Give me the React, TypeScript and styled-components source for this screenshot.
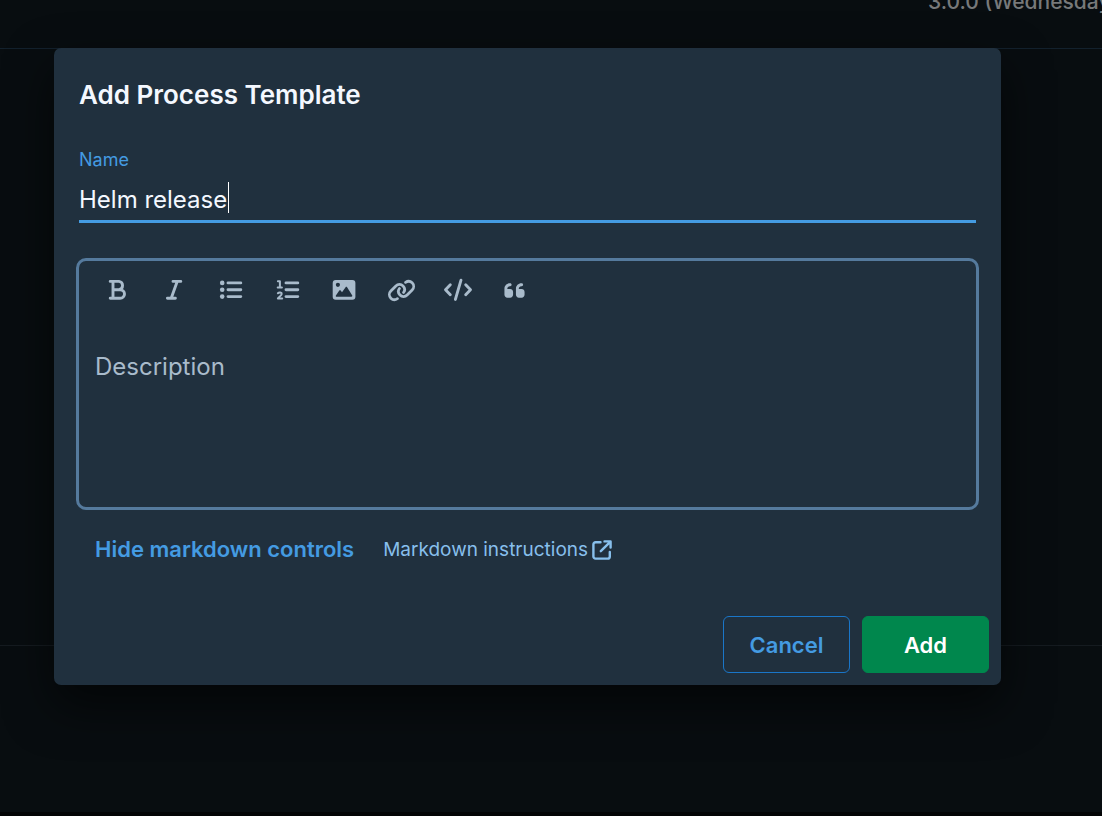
import React, { useState } from 'react';
import styled, { createGlobalStyle } from 'styled-components';
import { FaQuoteLeft } from 'react-icons/fa6';

const GlobalStyle = createGlobalStyle`
  *, *::before, *::after { box-sizing: border-box; }
  body {
    margin: 0;
    background: #080d10;
    color: #f4f8ff;
    font-family: Inter, Roboto, "Liberation Sans", sans-serif;
    overflow: hidden;
  }
  button, input, textarea { font-family: inherit; margin: 0; }
`;

const Page = styled.div`
  display: grid;
  grid-template-rows: 49px 597px 1fr;
  min-height: 100vh;
  border-bottom: 4px solid #030405;
`;

const Header = styled.header`
  display: flex;
  justify-content: flex-end;
  border-bottom: 1px solid #13212d;
  overflow: hidden;
`;

const Version = styled.span`
  flex: none;
  width: 174px;
  height: 24px;
  margin-top: -10px;
  font-size: 21px;
  line-height: 24px;
  font-weight: 500;
  color: #77797a;
  white-space: nowrap;
`;

const Content = styled.main`
  border-bottom: 1px solid #151b20;
`;

const Overlay = styled.div`
  position: absolute;
  inset: 0;
  padding: 48px 101px 0 54px;
`;

const Dialog = styled.form`
  display: flex;
  flex-direction: column;
  padding: 29px 12px 12px;
  border-radius: 7px;
  background: #20303e;
  box-shadow: 0 20px 48px 0 rgba(0, 0, 0, 0.6);
`;

const Title = styled.h1`
  margin: 0 13px;
  font-size: 26px;
  line-height: 36px;
  font-weight: 600;
`;

const Field = styled.div`
  display: flex;
  flex-direction: column;
  margin: 34px 13px 0;
`;

const Label = styled.label`
  font-size: 18px;
  line-height: 26px;
  color: #449be2;
`;

const InputWrap = styled.div`
  position: relative;
  border-bottom: 3px solid #449be2;
`;

const TextInput = styled.input`
  display: block;
  width: 100%;
  height: 47px;
  padding: 6px 0 0;
  border: 0;
  outline: 0;
  background: none;
  color: inherit;
  caret-color: transparent;
  font-size: 24px;
`;

const CaretTrack = styled.span`
  position: absolute;
  left: 0;
  top: 9px;
  height: 31px;
  padding-right: 1px;
  border-right: 1px solid #ffffff;
  font-size: 24px;
  white-space: pre;
  color: transparent;
  pointer-events: none;
  user-select: none;
`;

const Editor = styled.div`
  margin: 35px 10px 0;
  height: 252px;
  display: flex;
  flex-direction: column;
  border: 3px solid #557a9d;
  border-radius: 10px;
`;

const Toolbar = styled.div`
  display: flex;
  justify-content: space-between;
  width: 430px;
  max-width: 100%;
  margin: 13px 22px;
`;

const ToolButton = styled.button`
  display: flex;
  align-items: center;
  justify-content: center;
  width: 32px;
  height: 32px;
  padding: 0;
  border: 0;
  background: none;
  color: #a9bbcb;
`;

const Description = styled.textarea`
  flex: 1;
  padding: 32px 16px 0;
  border: 0;
  outline: 0;
  resize: none;
  background: none;
  color: inherit;
  font-size: 24px;
  line-height: 32px;
  &::placeholder { color: #a9bbcb; opacity: 1; }
`;

const Help = styled.div`
  display: flex;
  align-items: center;
  gap: 29px;
  margin: 21px 29px 0;
  height: 36px;
`;

const ToggleButton = styled.button`
  padding: 0;
  border: 0;
  background: none;
  color: #449be2;
  font-size: 22px;
  line-height: 32px;
  font-weight: 600;
`;

const HelpLink = styled.a`
  display: flex;
  align-items: center;
  gap: 4px;
  padding-top: 2px;
  color: #87bfec;
  font-size: 19px;
  line-height: 32px;
  text-decoration: none;
`;

const Actions = styled.div`
  display: flex;
  justify-content: flex-end;
  gap: 12px;
  margin-top: 49px;
`;

const ActionButton = styled.button<{ $primary?: boolean }>`
  width: 127px;
  height: 57px;
  padding: 0;
  border: 1px solid ${(p) => (p.$primary ? '#00874d' : '#1a76c8')};
  border-radius: 6px;
  background: ${(p) => (p.$primary ? '#00874d' : 'transparent')};
  color: ${(p) => (p.$primary ? '#ffffff' : '#449be2')};
  font-size: 22px;
  font-weight: 600;
`;

const Stroke = ({ children, size = 32, width = 2.9 }: { children: React.ReactNode; size?: number; width?: number }) => (
  <svg width={size} height={size} viewBox={`0 0 ${size} ${size}`} fill="none" stroke="currentColor"
    strokeWidth={width} strokeLinecap="round" strokeLinejoin="round" aria-hidden="true">
    {children}
  </svg>
);

const Lines = ({ from }: { from: number }) => (
  <path d={`M${from} 8.9H25.8M${from} 15.8H25.8M${from} 22.6H25.8`} />
);

const tools = [
  { name: 'Bold', icon: <Stroke><path d="M9.2 7.4H18a4.2 4.2 0 0 1 0 8.3H12M18 15.7h1.2a4.3 4.3 0 0 1 0 8.6H9.2M12 7.4v16.9" /></Stroke> },
  { name: 'Italic', icon: <Stroke><path d="M15 7.4h7.8M9.4 24.3h8M19.2 7.4l-6 16.9" /></Stroke> },
  {
    name: 'Bulleted list',
    icon: (
      <Stroke>
        <Lines from={13} />
        <g fill="currentColor" stroke="none">
          <circle cx="7.2" cy="8.9" r="2.3" /><circle cx="7.2" cy="15.8" r="2.3" /><circle cx="7.2" cy="22.6" r="2.3" />
        </g>
      </Stroke>
    ),
  },
  {
    name: 'Numbered list',
    icon: (
      <Stroke>
        <Lines from={14} />
        <path strokeWidth="2" d="M5.9 7.2h2v6.4M5.7 13.6h4.2M5.9 19.2c1.2-1.3 4-1 3.8.8-.1 1.3-2.4 2.7-3.8 4.4h4.3" />
      </Stroke>
    ),
  },
  {
    name: 'Image',
    icon: (
      <svg width="32" height="32" viewBox="0 0 32 32" fill="currentColor" fillRule="evenodd" aria-hidden="true">
        <path d="M7.7 6h16.7a3 3 0 0 1 3 3v13.7a3 3 0 0 1-3 3H7.7a3 3 0 0 1-3-3V9a3 3 0 0 1 3-3zM9.9 8.7a2.1 2.1 0 1 0 0 4.2 2.1 2.1 0 0 0 0-4.2zM8.7 22.8h14.7c.8 0 1.2-.8.7-1.5l-5-8c-.4-.6-1.1-.6-1.5 0l-3.6 5-1.3-1.7c-.4-.5-1.1-.5-1.4 0l-3.4 4.8c-.4.6 0 1.4.8 1.4z" />
      </svg>
    ),
  },
  {
    name: 'Link',
    icon: (
      <svg width="29" height="23" viewBox="0 0 640 512" fill="none" stroke="currentColor" strokeWidth="62" strokeLinecap="round" aria-hidden="true">
        <path d="M411 75C455.8 43.2 517.5 46.7 557.2 85.8A112.6 112.6 0 0 1 557.2 245L445 357.4A112.6 112.6 0 0 1 285.7 357.4C246 317.5 242 256 274 212" />
        <path d="M229 437C184.2 468.8 122.5 465.3 82.8 426.2A112.6 112.6 0 0 1 82.8 267L195 154.6A112.6 112.6 0 0 1 354.3 154.6C394 194.5 398 256 366 300" />
      </svg>
    ),
  },
  { name: 'Code', icon: <Stroke><path d="M19 6.2l-5.6 19.2M8.3 10.8l-4.8 5 4.8 5M23.7 10.8l4.8 5-4.8 5" /></Stroke> },
  { name: 'Quote', icon: <FaQuoteLeft size={23} aria-hidden="true" /> },
];

export default function App() {
  const [name, setName] = useState('Helm release');
  return (
    <>
      <GlobalStyle />
      <Page>
        <Header><Version>3.0.0 (Wednesday</Version></Header>
        <Content />
      </Page>
      <Overlay>
        <Dialog role="dialog" aria-labelledby="dialog-title" onSubmit={(e) => e.preventDefault()}>
          <Title id="dialog-title">Add Process Template</Title>
          <Field>
            <Label htmlFor="name">Name</Label>
            <InputWrap>
              <TextInput id="name" value={name} onChange={(e) => setName(e.target.value)} autoComplete="off" />
              <CaretTrack aria-hidden="true">{name}</CaretTrack>
            </InputWrap>
          </Field>
          <Editor>
            <Toolbar role="toolbar">
              {tools.map((t) => (
                <ToolButton key={t.name} type="button" aria-label={t.name}>{t.icon}</ToolButton>
              ))}
            </Toolbar>
            <Description aria-label="Description" placeholder="Description" />
          </Editor>
          <Help>
            <ToggleButton type="button">Hide markdown controls</ToggleButton>
            <HelpLink href="#markdown">
              Markdown instructions
              <Stroke size={20} width={2.4}>
                <path d="M8.5 2.2H3.6a2.2 2.2 0 0 0-2.2 2.2v12a2.2 2.2 0 0 0 2.2 2.2h12a2.2 2.2 0 0 0 2.2-2.2V12M12.5 1.4h6.1v6.1M18.2 1.8L8.8 11.2" />
              </Stroke>
            </HelpLink>
          </Help>
          <Actions>
            <ActionButton type="button">Cancel</ActionButton>
            <ActionButton type="submit" $primary>Add</ActionButton>
          </Actions>
        </Dialog>
      </Overlay>
    </>
  );
}
